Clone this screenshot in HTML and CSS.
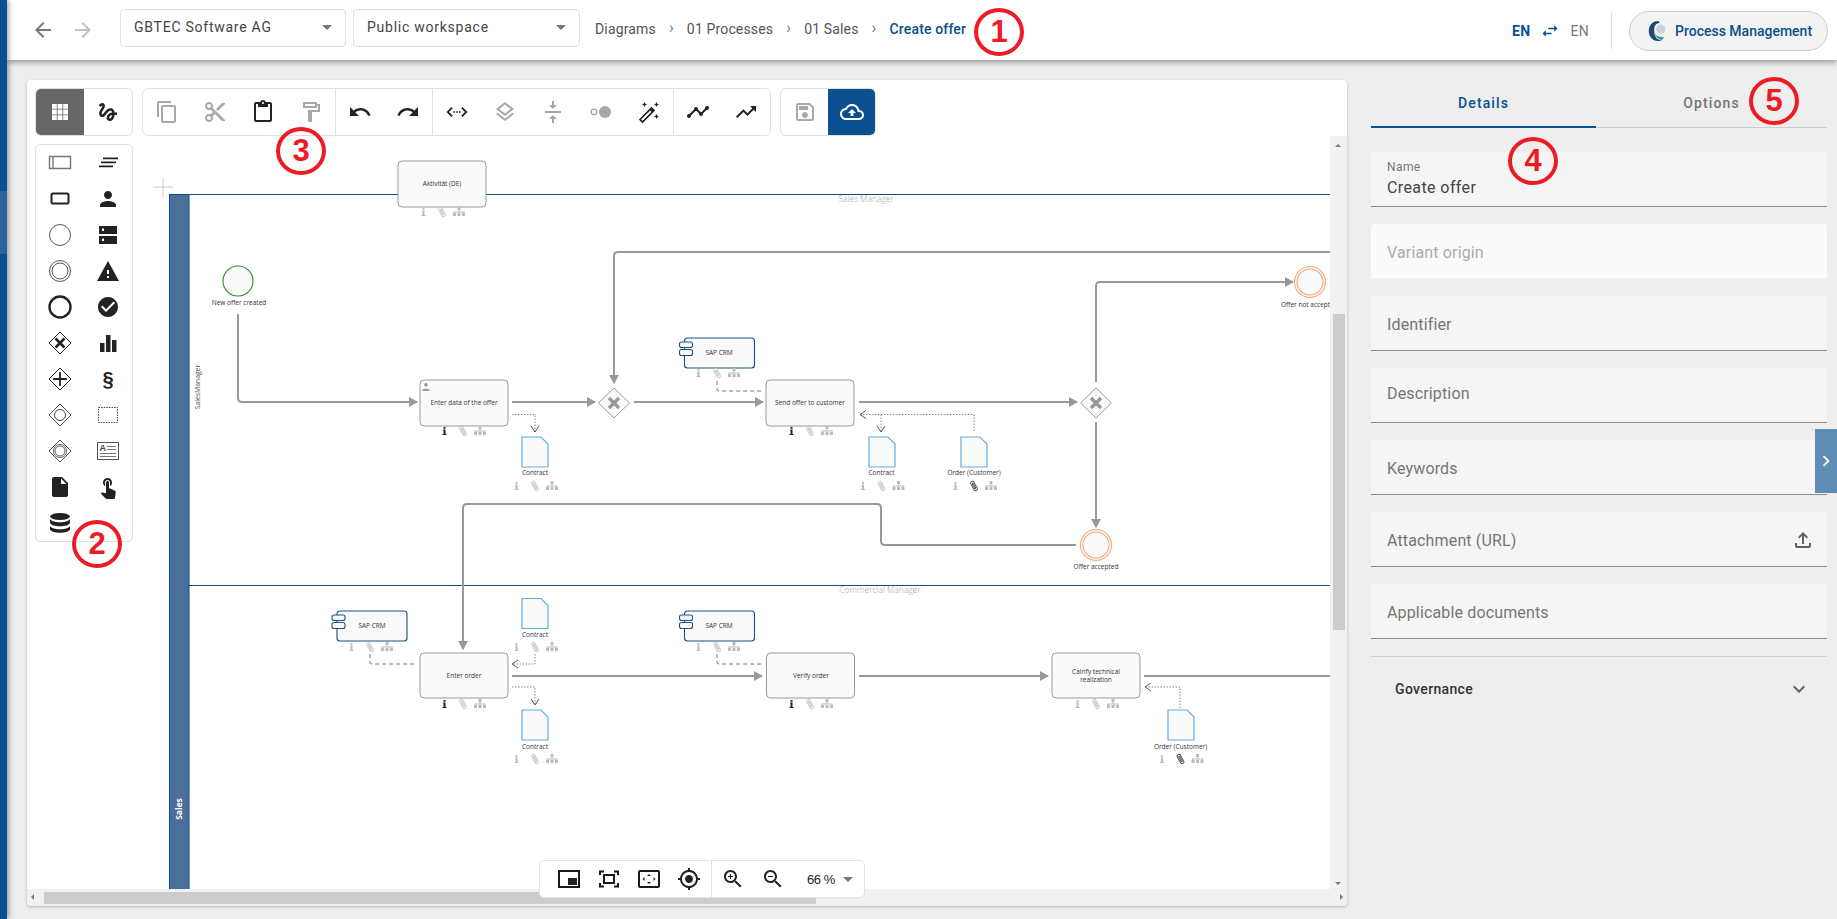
FILE: index.html
```html
<!DOCTYPE html>
<html lang="en">
  <head>
    <meta charset="UTF-8" />
    <title>Create offer</title>
    <link rel="stylesheet" href="styles.css">
  </head>
  <body>
    <div class="strip"><div class="stripItem"></div></div>

    <div class="page">
      <header class="topbar">
        <svg class="ico navIcon" viewBox="0 0 24 24"><path d="M20 11H7.83l5.59-5.59L12 4l-8 8 8 8 1.41-1.41L7.83 13H20v-2z"/></svg>
        <svg class="ico navIcon off" viewBox="0 0 24 24"><path d="M12 4l-1.41 1.41L16.17 11H4v2h12.17l-5.58 5.59L12 20l8-8z"/></svg>
        <div class="select first"><span>GBTEC Software AG</span><i class="caret"></i></div>
        <div class="select"><span>Public workspace</span><i class="caret"></i></div>
        <nav class="crumbs">
          <span>Diagrams</span><b>›</b><span>01 Processes</span><b>›</b><span>01 Sales</span><b>›</b><span class="current">Create offer</span>
        </nav>
        <div class="topRight">
          <span class="lang on">EN</span>
          <svg class="swap" viewBox="0 0 24 24"><path d="M6.99 11L3 15l3.99 4v-3H14v-2H6.99v-3zM21 9l-3.99-4v3H10v2h7.01v3L21 9z"/></svg>
          <span class="lang">EN</span>
          <div class="vline"></div>
          <div class="appBtn">
            <svg class="logo" viewBox="0 0 24 24">
              <path fill="#1d4a72" d="M13 1C7 1 3 6 3 12s4 11 10 11c2 0 3-.5 4-1-5 0-8-4-8-10S10 4 15 3c-.5-1-1-2-2-2z"/>
              <path fill="#3f8f9e" d="M9 14c1 4 4 7 8 8 1-1 2-2 2.500-3.500C15 19 11 18 9 14z"/>
              <circle fill="#c9d3da" cx="16" cy="10" r="5"/>
            </svg>
            <span>Process Management</span>
          </div>
        </div>
      </header>

      <main class="content">
        <section class="canvas">
          <svg class="diagram" viewBox="27 80 1320 826">
            <defs>
              <marker id="arrow" markerUnits="userSpaceOnUse" markerWidth="9" markerHeight="10" refX="8" refY="5" orient="auto"><path d="M0 0L9 5L0 10z" fill="#999"/></marker>
              <marker id="open" markerUnits="userSpaceOnUse" markerWidth="8" markerHeight="10" refX="7" refY="5" orient="auto"><path d="M1 1L7 5L1 9" fill="none" stroke="#555"/></marker>
              <clipPath id="view"><rect x="27" y="80" width="1303" height="809"/></clipPath>
              <g id="meta">
                <path class="miI" d="M-19.500 -4h2v1.800h-2zM-20 -1.500h2.500v4.500h1v1h-4v-1h1v-3.500h-.5z"/>
                <g class="miC"><rect x="-1.800" y="-5" width="3.600" height="10" rx="1.800" transform="rotate(-30)"/><rect x="-.6" y="-3" width="1.200" height="6" rx=".6" transform="rotate(-30)"/></g>
                <path class="miO" d="M15.500 -5h3v3h-3zM16.500 -2h1v1.500h5v1.500h-1v-.5h-9v.5h-1v-1.500h5zM11 1h3v3h-3zM15.500 1h3v3h-3zM20 1h3v3h-3z"/>
              </g>
              <g id="doc">
                <path class="docShape" d="M0 0h19l7 7v23h-26z"/>
              </g>
              <g id="sys">
                <rect class="sysBox" x="5" y="0" width="70" height="30" rx="3"/>
                <rect class="sysBox" x="0" y="4" width="13" height="5.500" rx="2"/>
                <rect class="sysBox" x="0" y="11.500" width="13" height="6" rx="2"/>
              </g>
              <path id="gwX" d="M-5 -5L5 5M5 -5L-5 5"/>
            </defs>

            <g clip-path="url(#view)">
              <path class="crosshair" d="M153 187h20M163 177v20"/>

              <!-- pool and lanes -->
              <rect class="poolHead" x="169.500" y="194.500" width="19.500" height="700"/>
              <path class="laneLine" d="M189 194.500H1330M189 585.500H1330"/>
              <text class="poolName" transform="translate(182,809) rotate(-90)">Sales</text>
              <text class="laneSide" transform="translate(200,387) rotate(-90)">SalesManager</text>
              <text class="laneName" x="866" y="202">Sales Manager</text>
              <text class="laneName" x="880" y="593">Commercial Manager</text>

              <!-- sequence flows -->
              <path class="flow" marker-end="url(#arrow)" d="M238 314V398Q238 402 242 402H417"/>
              <path class="flow" marker-end="url(#arrow)" d="M512 402H595"/>
              <path class="flow" marker-end="url(#arrow)" d="M1330 252H618Q614 252 614 256V383"/>
              <path class="flow" marker-end="url(#arrow)" d="M634 402H763"/>
              <path class="flow" marker-end="url(#arrow)" d="M859 402H1077"/>
              <path class="flow" marker-end="url(#arrow)" d="M1096 382V286Q1096 282 1100 282H1293"/>
              <path class="flow" marker-end="url(#arrow)" d="M1096 422V527"/>
              <path class="flow" marker-end="url(#arrow)" d="M1076 545H885Q881 545 881 541V508Q881 504 877 504H467Q463 504 463 508V649"/>
              <path class="flow" marker-end="url(#arrow)" d="M512 676H762"/>
              <path class="flow" marker-end="url(#arrow)" d="M859 676H1048"/>
              <path class="flow" d="M1144 676H1330"/>

              <!-- associations -->
              <path class="dash" d="M717 381V389Q717 391 719 391H762"/>
              <path class="dash" d="M370 654V662Q370 664 372 664H415"/>
              <path class="dash" d="M717 654V662Q717 664 719 664H761"/>
              <path class="dots" marker-end="url(#open)" d="M512 414.500H535V432"/>
              <path class="dots" marker-end="url(#open)" d="M881 414.500V432"/>
              <path class="dots" marker-end="url(#open)" d="M974 431V414.500H860"/>
              <path class="dots" marker-end="url(#open)" d="M535 654V664H512"/>
              <path class="dots" marker-end="url(#open)" d="M512 687H535V705"/>
              <path class="dots" marker-end="url(#open)" d="M1180 708V687H1145"/>

              <!-- events -->
              <circle class="startEv" cx="238" cy="281" r="15"/>
              <text class="lbl" x="239" y="305">New offer created</text>
              <circle class="endEv" cx="1310" cy="282" r="15.500"/><circle class="endEv" cx="1310" cy="282" r="13"/>
              <text class="lbl" x="1281" y="307" style="text-anchor:start">Offer not accepted</text>
              <circle class="endEv" cx="1096" cy="545" r="15.500"/><circle class="endEv" cx="1096" cy="545" r="13"/>
              <text class="lbl" x="1096" y="569">Offer accepted</text>

              <!-- gateways -->
              <path class="gateway" d="M614 388L629.500 403L614 418L598.500 403z"/>
              <use class="gwMark" href="#gwX" x="614" y="403"/>
              <path class="gateway" d="M1096 388L1111.500 403L1096 418L1080.500 403z"/>
              <use class="gwMark" href="#gwX" x="1096" y="403"/>

              <!-- activities -->
              <rect class="task" x="398" y="161" width="88" height="46" rx="4"/>
              <text class="lbl" x="442" y="185.500">Aktivität (DE)</text>
              <use href="#meta" x="442" y="212"/>

              <rect class="task" x="420" y="380" width="88" height="46" rx="4"/>
              <path class="taskUser" d="M426 383a1.800 1.800 0 1 1-.01 0zM422.500 390c0-1.800 7-1.800 7 0v1h-7z"/>
              <text class="lbl" x="464" y="405">Enter data of the offer</text>
              <use class="iOn" href="#meta" x="463" y="431"/>

              <rect class="task" x="766" y="380" width="88" height="46" rx="4"/>
              <text class="lbl" x="810" y="405">Send offer to customer</text>
              <use class="iOn" href="#meta" x="810" y="431"/>

              <rect class="task" x="420" y="653" width="88" height="45" rx="4"/>
              <text class="lbl" x="464" y="678">Enter order</text>
              <use class="iOn" href="#meta" x="463" y="704"/>

              <rect class="task" x="766.500" y="653" width="88" height="45" rx="4"/>
              <text class="lbl" x="811" y="678">Verify order</text>
              <use class="iOn" href="#meta" x="810" y="704"/>

              <rect class="task" x="1052" y="653" width="88" height="45" rx="4"/>
              <text class="lbl" x="1096" y="674">Calrify technical</text>
              <text class="lbl" x="1096" y="682">realization</text>
              <use href="#meta" x="1096" y="704"/>

              <!-- systems -->
              <use href="#sys" x="679.500" y="338"/>
              <text class="lbl" x="719" y="355">SAP CRM</text>
              <use href="#meta" x="717" y="373"/>
              <use href="#sys" x="332" y="611"/>
              <text class="lbl" x="372" y="628">SAP CRM</text>
              <use href="#meta" x="370" y="647"/>
              <use href="#sys" x="679.500" y="611"/>
              <text class="lbl" x="719" y="628">SAP CRM</text>
              <use href="#meta" x="717" y="647"/>

              <!-- documents -->
              <use href="#doc" x="522" y="437"/>
              <text class="lbl" x="535" y="475">Contract</text>
              <use href="#meta" x="535" y="486"/>
              <use href="#doc" x="869" y="437"/>
              <text class="lbl" x="881.500" y="475">Contract</text>
              <use href="#meta" x="881.500" y="486"/>
              <use href="#doc" x="961" y="437"/>
              <text class="lbl" x="974" y="475">Order (Customer)</text>
              <use class="cOn" href="#meta" x="974" y="486"/>
              <use href="#doc" x="522" y="598.500"/>
              <text class="lbl" x="535" y="637">Contract</text>
              <use href="#meta" x="535" y="647"/>
              <use href="#doc" x="522" y="710"/>
              <text class="lbl" x="535" y="749">Contract</text>
              <use href="#meta" x="535" y="759"/>
              <use href="#doc" x="1168" y="710"/>
              <text class="lbl" x="1180.500" y="749">Order (Customer)</text>
              <use class="cOn" href="#meta" x="1180.500" y="759"/>
            </g>
          </svg>

          <div class="toolbar">
            <div class="group">
              <div class="tool active"><svg class="ico" viewBox="0 0 24 24"><path d="M4 4h4.800v4.800H4zM9.600 4h4.800v4.800H9.600zM15.200 4H20v4.800h-4.800zM4 9.600h4.800v4.800H4zM9.600 9.600h4.800v4.800H9.600zM15.200 9.600H20v4.800h-4.800zM4 15.200h4.800V20H4zM9.600 15.200h4.800V20H9.600zM15.200 15.200H20V20h-4.800z"/></svg></div>
              <div class="tool"><svg class="ico" viewBox="0 0 24 24"><path d="M4.590 6.890c.7-.71 1.400-1.350 1.710-1.220.5.200 0 1.030-.3 1.520-.25.420-2.860 3.890-2.860 6.310 0 1.280.48 2.340 1.340 2.980.75.560 1.740.73 2.640.46 1.070-.31 1.950-1.400 3.060-2.770 1.210-1.490 2.830-3.440 4.080-3.440 1.630 0 1.650 1.010 1.760 1.790-3.780.64-5.380 3.670-5.380 5.370 0 1.700 1.440 3.090 3.210 3.090 1.630 0 4.290-1.330 4.690-6.100H21v-2.500h-2.470c-.15-1.650-1.090-4.200-4.030-4.200-2.250 0-4.180 1.910-4.940 2.840-.58.73-2.060 2.480-2.290 2.720-.25.3-.68.84-1.110.84-.45 0-.72-.83-.36-1.920.35-1.090 1.400-2.860 1.850-3.520.78-1.140 1.300-1.920 1.300-3.280C8.950 3.690 7.310 3 6.440 3 5.120 3 3.970 4 3.720 4.250c-.36.36-.66.66-.88.93l1.750 1.710zm9.290 11.660c-.31 0-.74-.26-.74-.72 0-.6.73-2.200 2.870-2.760-.3 2.690-1.430 3.480-2.130 3.480z"/></svg></div>
            </div>
            <div class="group">
              <div class="section">
                <div class="tool off"><svg class="ico" viewBox="0 0 24 24"><path d="M16 1H4c-1.100 0-2 .9-2 2v14h2V3h12V1zm3 4H8c-1.100 0-2 .9-2 2v14c0 1.100.9 2 2 2h11c1.100 0 2-.9 2-2V7c0-1.100-.9-2-2-2zm0 16H8V7h11v14z"/></svg></div>
                <div class="tool off"><svg class="ico" viewBox="0 0 24 24"><path d="M9.640 7.640c.23-.5.36-1.050.36-1.640 0-2.210-1.790-4-4-4S2 3.790 2 6s1.790 4 4 4c.59 0 1.140-.13 1.640-.36L10 12l-2.360 2.360C7.140 14.130 6.590 14 6 14c-2.210 0-4 1.790-4 4s1.790 4 4 4 4-1.790 4-4c0-.59-.13-1.140-.36-1.640L12 14l7 7h3v-1L9.640 7.640zM6 8c-1.100 0-2-.89-2-2s.9-2 2-2 2 .89 2 2-.9 2-2 2zm0 12c-1.100 0-2-.89-2-2s.9-2 2-2 2 .89 2 2-.9 2-2 2zm6-7.500c-.28 0-.5-.22-.5-.5s.22-.5.5-.5.5.22.5.5-.22.5-.5.5zM19 3l-6 6 2 2 7-7V3z"/></svg></div>
                <div class="tool"><svg class="ico" viewBox="0 0 24 24"><path d="M19 2h-4.180C14.400.84 13.300 0 12 0c-1.300 0-2.400.84-2.820 2H5c-1.100 0-2 .9-2 2v16c0 1.100.9 2 2 2h14c1.100 0 2-.9 2-2V4c0-1.100-.9-2-2-2zm-7 0c.55 0 1 .45 1 1s-.45 1-1 1-1-.45-1-1 .45-1 1-1zm7 18H5V4h2v3h10V4h2v16z"/></svg></div>
                <div class="tool off"><svg class="ico" viewBox="0 0 24 24"><path d="M18 4V3c0-.55-.45-1-1-1H5c-.55 0-1 .45-1 1v4c0 .55.45 1 1 1h12c.55 0 1-.45 1-1V6h1v4H9v11c0 .55.45 1 1 1h2c.55 0 1-.45 1-1v-9h8V4h-3zm-2 2H6V4h10v2z"/></svg></div>
              </div>
              <div class="section">
                <div class="tool"><svg class="ico" viewBox="0 0 24 24"><path d="M12.500 8c-2.650 0-5.050.99-6.900 2.600L2 7v9h9l-3.620-3.620c1.390-1.160 3.160-1.880 5.120-1.880 3.540 0 6.550 2.310 7.600 5.500l2.370-.78C21.080 11.030 17.150 8 12.500 8z"/></svg></div>
                <div class="tool"><svg class="ico" viewBox="0 0 24 24"><path d="M18.400 10.600C16.550 8.990 14.150 8 11.500 8c-4.650 0-8.580 3.030-9.960 7.220L3.900 16c1.050-3.190 4.050-5.500 7.600-5.500 1.950 0 3.730.72 5.120 1.880L13 16h9V7l-3.600 3.600z"/></svg></div>
              </div>
              <div class="section">
                <div class="tool"><svg class="ico" viewBox="0 0 24 24"><path d="M6.500 7L1.500 12L6.500 17L7.800 15.800L4 12L7.800 8.200zM17.500 7L22.500 12L17.500 17L16.200 15.800L20 12L16.200 8.200zM8.400 11.200h1.600v1.600H8.400zM11.200 11.200h1.600v1.600h-1.600zM14 11.200h1.600v1.600H14z"/></svg></div>
                <div class="tool off"><svg class="ico" viewBox="0 0 24 24"><path d="M11.990 18.540l-7.370-5.730L3 14.070l9 7 9-7-1.630-1.270-7.380 5.740zM12 16l7.360-5.730L21 9l-9-7-9 7 1.630 1.270L12 16zm0-11.470L17.740 9 12 13.470 6.260 9 12 4.530z"/></svg></div>
                <div class="tool off"><svg class="ico" viewBox="0 0 24 24"><path d="M8 19h3v4h2v-4h3l-4-4-4 4zm8-14h-3V1h-2v4H8l4 4 4-4zM4 11v2h16v-2H4z"/></svg></div>
                <div class="tool off"><svg class="ico" viewBox="0 0 24 24"><circle cx="16" cy="12" r="6"/><circle cx="5" cy="12" r="2.800" fill="none" stroke="#a8a8a8" stroke-width="1.300"/></svg></div>
                <div class="tool"><svg class="ico" viewBox="0 0 24 24"><path d="M3 19.500L14.500 8l2.500 2.500L5.500 22z" fill="none" stroke="#222" stroke-width="1.700"/><path d="M12.500 10l2.500 2.500 2-2L14.500 8zM7.500 2l.8 1.700L10 4.500l-1.700.8L7.500 7l-.8-1.700L5 4.500l1.700-.8zM19.500 2l.8 1.700 1.700.8-1.700.8-.8 1.700-.8-1.700-1.700-.8 1.700-.8zM19.500 14l.8 1.700 1.700.8-1.700.8-.8 1.700-.8-1.700-1.700-.8 1.700-.8z"/></svg></div>
              </div>
              <div class="section">
                <div class="tool"><svg class="ico" viewBox="0 0 24 24"><path d="M23 8c0 1.100-.9 2-2 2-.18 0-.35-.02-.51-.07l-3.560 3.550c.05.16.07.34.07.52 0 1.100-.9 2-2 2s-2-.9-2-2c0-.18.02-.36.07-.52l-2.550-2.550c-.16.05-.34.07-.52.07s-.36-.02-.52-.07l-4.550 4.560c.05.16.07.33.07.51 0 1.100-.9 2-2 2s-2-.9-2-2 .9-2 2-2c.18 0 .35.02.51.07l4.560-4.550C8.020 9.360 8 9.180 8 9c0-1.100.9-2 2-2s2 .9 2 2c0 .18-.02.36-.07.52l2.550 2.550c.16-.05.34-.07.52-.07s.36.02.52.07l3.550-3.560C19.020 8.350 19 8.180 19 8c0-1.100.9-2 2-2s2 .9 2 2z"/></svg></div>
                <div class="tool"><svg class="ico" viewBox="0 0 24 24"><path d="M16 6l2.290 2.290-4.880 4.880-4-4L2 16.590 3.410 18l6-6 4 4 6.300-6.290L22 12V6z"/></svg></div>
              </div>
            </div>
            <div class="group saveGroup">
              <div class="tool off"><svg class="ico" viewBox="0 0 24 24"><path d="M17 3H5c-1.110 0-2 .9-2 2v14c0 1.100.89 2 2 2h14c1.100 0 2-.9 2-2V7l-4-4zm2 16H5V5h11.170L19 7.830V19zm-7-7c-1.660 0-3 1.340-3 3s1.340 3 3 3 3-1.340 3-3-1.340-3-3-3zM6 6h9v4H6z"/></svg></div>
              <div class="tool primary"><svg class="ico" viewBox="0 0 24 24"><path d="M19.350 10.040C18.670 6.590 15.640 4 12 4 9.110 4 6.600 5.640 5.350 8.040 2.340 8.360 0 10.910 0 14c0 3.310 2.690 6 6 6h13c2.760 0 5-2.240 5-5 0-2.640-2.050-4.780-4.650-4.960zM19 18H6c-2.210 0-4-1.790-4-4 0-2.050 1.530-3.760 3.560-3.970l1.070-.11.5-.95C8.080 7.140 9.940 6 12 6c2.620 0 4.880 1.860 5.390 4.430l.3 1.500 1.530.11c1.560.1 2.780 1.410 2.780 2.960 0 1.650-1.350 3-3 3zM8 13h2.550v3h2.900v-3H16l-4-4z"/></svg></div>
            </div>
          </div>

          <div class="palette">
            <svg class="ico gray" viewBox="0 0 24 24"><path d="M1.500 5.500h21v12h-21zM5 5.500v12" fill="none" stroke="#777" stroke-width="1.400"/></svg>
            <svg class="ico" viewBox="0 0 24 24"><path d="M7 6.500h15V8.300H7zM5 10.500h15v1.800H5zM3 14.500h14v1.800H3z"/></svg>
            <svg class="ico" viewBox="0 0 24 24"><rect x="3.500" y="6.500" width="17" height="10" rx="1.500" fill="none" stroke="#222" stroke-width="2"/></svg>
            <svg class="ico" viewBox="0 0 24 24"><path d="M12 12c2.210 0 4-1.790 4-4s-1.790-4-4-4-4 1.790-4 4 1.790 4 4 4zm0 2c-2.670 0-8 1.340-8 4v2h16v-2c0-2.660-5.330-4-8-4z"/></svg>
            <svg class="ico" viewBox="0 0 24 24"><circle cx="12" cy="12" r="10.500" fill="none" stroke="#444" stroke-width=".9"/></svg>
            <svg class="ico" viewBox="0 0 24 24"><path fill-rule="evenodd" d="M3 3h18v8H3zM3 13h18v8H3zM6 5.500h2v2.500H6zM6 15.500h2V18H6z"/></svg>
            <svg class="ico" viewBox="0 0 24 24"><circle cx="12" cy="12" r="10.500" fill="none" stroke="#444" stroke-width=".9"/><circle cx="12" cy="12" r="8" fill="none" stroke="#444" stroke-width=".9"/></svg>
            <svg class="ico" viewBox="0 0 24 24"><path d="M1 22h22L12 2 1 22zm12-3h-2v-2h2v2zm0-4h-2v-4h2v4z"/></svg>
            <svg class="ico" viewBox="0 0 24 24"><circle cx="12" cy="12" r="10.500" fill="none" stroke="#222" stroke-width="2.400"/></svg>
            <svg class="ico" viewBox="0 0 24 24"><path d="M12 2C6.480 2 2 6.480 2 12s4.480 10 10 10 10-4.480 10-10S17.520 2 12 2zm-2 15l-5-5 1.410-1.410L10 14.170l7.590-7.590L19 8l-9 9z"/></svg>
            <svg class="ico" viewBox="0 0 24 24"><path d="M12 1L23 12L12 23L1 12z" fill="none" stroke="#222" stroke-width="1"/><path d="M7.500 7.500L16.500 16.500M16.500 7.500L7.500 16.500" stroke="#222" stroke-width="2.600"/></svg>
            <svg class="ico" viewBox="0 0 24 24"><path d="M4 12h4.500v9H4zM10 4h4.500v17H10zM16 9h4.500v12H16z"/></svg>
            <svg class="ico" viewBox="0 0 24 24"><path d="M12 1L23 12L12 23L1 12z" fill="none" stroke="#222" stroke-width="1"/><path d="M12 5V19M5 12H19" stroke="#222" stroke-width="1.800"/></svg>
            <span class="para">§</span>
            <svg class="ico" viewBox="0 0 24 24"><path d="M12 1L23 12L12 23L1 12z" fill="none" stroke="#333" stroke-width=".9"/><circle cx="12" cy="12" r="5.500" fill="none" stroke="#333" stroke-width=".9"/></svg>
            <svg class="ico" viewBox="0 0 24 24"><rect x="2.500" y="4.500" width="19" height="15" fill="none" stroke="#444" stroke-dasharray="1.500 1.100"/></svg>
            <svg class="ico" viewBox="0 0 24 24"><path d="M12 1L23 12L12 23L1 12z" fill="none" stroke="#333" stroke-width=".9"/><circle cx="12" cy="12" r="6.500" fill="none" stroke="#555" stroke-width=".9"/><circle cx="12" cy="12" r="5" fill="none" stroke="#555" stroke-width=".9"/></svg>
            <svg class="ico" viewBox="0 0 24 24"><rect x="1.500" y="3.500" width="21" height="17" fill="none" stroke="#555"/><text class="formA" x="3.500" y="12">A</text><path d="M11 7h9v1h-9zM11 10h9v1h-9zM4 14h16v1H4zM4 17h16v1H4z" fill="#777"/></svg>
            <svg class="ico" viewBox="0 0 24 24"><path d="M6 2c-1.100 0-1.990.9-1.990 2L4 20c0 1.100.89 2 1.990 2H18c1.100 0 2-.9 2-2V8l-6-6H6zm7 7V3.500L18.500 9H13z"/></svg>
            <svg class="ico" viewBox="0 0 24 24"><path d="M9 11.240V7.500C9 6.120 10.120 5 11.500 5S14 6.120 14 7.500v3.740c1.210-.81 2-2.180 2-3.740C16 5.010 13.990 3 11.500 3S7 5.010 7 7.500c0 1.560.79 2.930 2 3.740zm9.840 4.630l-4.540-2.260c-.17-.07-.35-.11-.54-.11H13v-6c0-.83-.67-1.500-1.500-1.500S10 6.670 10 7.500v10.740l-3.430-.72c-.08-.01-.15-.03-.24-.03-.31 0-.59.13-.79.33l-.79.8 4.940 4.940c.27.27.65.44 1.060.44h6.790c.75 0 1.330-.55 1.440-1.280l.75-5.270c.01-.07.02-.14.02-.2 0-.62-.38-1.160-.91-1.380z"/></svg>
            <svg class="ico" viewBox="0 0 24 24"><ellipse cx="12" cy="5.500" rx="10" ry="3.500"/><path d="M2 8c1 2 5 3.200 10 3.200S21 10 22 8v4c-1 2-5 3.300-10 3.300S3 14 2 12zM2 15c1 2 5 3.200 10 3.200S21 17 22 15v3.500c-1 2-5 3.300-10 3.300S3 20.500 2 18.500z"/></svg>
          </div>

          <div class="zoomBar">
            <div class="section">
              <div class="ztool"><svg class="ico" viewBox="0 0 24 24"><rect x="2" y="4" width="20" height="16" fill="none" stroke="#1a1a1a" stroke-width="2"/><rect x="11" y="11" width="9" height="7"/></svg></div>
              <div class="ztool"><svg class="ico" viewBox="0 0 24 24"><path d="M3 8V4.500h4M17 4.500h4V8M21 16v3.500h-4M7 19.500H3V16" fill="none" stroke="#1a1a1a" stroke-width="2"/><rect x="7" y="8" width="10" height="8" fill="none" stroke="#1a1a1a" stroke-width="2"/></svg></div>
              <div class="ztool"><svg class="ico" viewBox="0 0 24 24"><rect x="2" y="4" width="20" height="16" rx="1" fill="none" stroke="#1a1a1a" stroke-width="2"/><path d="M12 7l2 2h-4zM12 17l2-2h-4zM5.500 12l2-2v4zM18.500 12l-2-2v4z"/></svg></div>
              <div class="ztool"><svg class="ico" viewBox="0 0 24 24"><path d="M12 8c-2.210 0-4 1.790-4 4s1.790 4 4 4 4-1.790 4-4-1.790-4-4-4zm8.940 3c-.46-4.170-3.770-7.480-7.940-7.940V1h-2v2.060C6.830 3.520 3.520 6.830 3.060 11H1v2h2.060c.46 4.170 3.770 7.480 7.940 7.940V23h2v-2.060c4.170-.46 7.480-3.770 7.940-7.940H23v-2h-2.060zM12 19c-3.870 0-7-3.130-7-7s3.130-7 7-7 7 3.130 7 7-3.130 7-7 7z"/></svg></div>
            </div>
            <div class="ztool"><svg class="ico" viewBox="0 0 24 24"><path d="M15.500 14h-.79l-.28-.27C15.410 12.590 16 11.110 16 9.500 16 5.910 13.090 3 9.500 3S3 5.910 3 9.500 5.910 16 9.500 16c1.610 0 3.090-.59 4.230-1.570l.27.28v.79l5 4.990L20.490 19l-4.990-5zm-6 0C7.010 14 5 11.990 5 9.500S7.010 5 9.500 5 14 7.010 14 9.500 11.990 14 9.500 14zm2.500-4h-2v2H9v-2H7V9h2V7h1v2h2v1z"/></svg></div>
            <div class="ztool"><svg class="ico" viewBox="0 0 24 24"><path d="M15.500 14h-.79l-.28-.27C15.410 12.590 16 11.110 16 9.500 16 5.910 13.090 3 9.500 3S3 5.910 3 9.500 5.910 16 9.500 16c1.610 0 3.090-.59 4.230-1.570l.27.28v.79l5 4.990L20.490 19l-4.990-5zm-6 0C7.010 14 5 11.990 5 9.500S7.010 5 9.500 5 14 7.010 14 9.500 11.990 14 9.500 14zM7 9h5v1H7z"/></svg></div>
            <span class="zoomVal">66 %</span><i class="caret"></i>
          </div>

          <div class="vbar"><div class="vthumb"></div><span class="sa up"></span><span class="sa down"></span></div>
          <div class="hbar"><div class="hthumb"></div><span class="sa left"></span><span class="sa right"></span></div>
        </section>

        <aside class="panel">
          <div class="tabs">
            <div class="tab selected">Details</div>
            <div class="tab">Options</div>
          </div>
          <div class="fields">
            <div class="field named"><small>Name</small><span class="value">Create offer</span></div>
            <div class="field disabled"><span>Variant origin</span></div>
            <div class="field"><span>Identifier</span></div>
            <div class="field raised"><span>Description</span></div>
            <div class="field"><span>Keywords</span></div>
            <div class="field"><span>Attachment (URL)</span>
              <svg class="upload" viewBox="0 0 24 24"><path d="M18 15v3H6v-3H4v3c0 1.100.9 2 2 2h12c1.100 0 2-.9 2-2v-3h-2zM7 9l1.410 1.410L11 7.830V16h2V7.830l2.590 2.580L17 9l-5-5-5 5z"/></svg>
            </div>
            <div class="field"><span>Applicable documents</span></div>
          </div>
          <div class="accordion">
            <span>Governance</span>
            <svg class="chev" viewBox="0 0 24 24"><path d="M7.410 8.590L12 13.170l4.590-4.580L18 10l-6 6-6-6z"/></svg>
          </div>
        </aside>
      </main>
    </div>

    <div class="sideTab"><svg viewBox="0 0 24 24"><path d="M10 6L8.590 7.410 13.170 12l-4.580 4.590L10 18l6-6z"/></svg></div>

    <div class="mark m1">1</div>
    <div class="mark m2">2</div>
    <div class="mark m3">3</div>
    <div class="mark m4">4</div>
    <div class="mark m5">5</div>
  </body>
</html>
```

FILE: styles.css
```css
* {
  margin: 0;
  padding: 0;
  box-sizing: border-box;
}

body {
  width: 1837px;
  height: 919px;
  display: flex;
  overflow: hidden;
  background-color: #eeeeee;
  font-family: Roboto, sans-serif;
  font-size: 14px;
  color: #444;
}

.strip {
  width: 7px;
  flex: none;
  background-color: #0a4f8f;
  box-shadow: 2px 0 5px rgba(0, 0, 0, 0.35);
  z-index: 2;
}

.stripItem {
  height: 63px;
  margin-top: 191px;
  background-color: #2a639a;
}

.page {
  flex: 1;
  display: flex;
  flex-direction: column;
  min-width: 0;
}

.ico {
  width: 24px;
  height: 24px;
  fill: #222;
  display: block;
}

/* top bar */
.topbar {
  height: 60px;
  flex: none;
  display: flex;
  align-items: center;
  padding: 0 9px 0 24px;
  background-color: #fff;
  box-shadow: 0 2px 6px rgba(0, 0, 0, 0.4);
  position: relative;
  z-index: 1;
}

.navIcon {
  fill: #777;
  margin-right: 16px;
}

.navIcon.off {
  fill: #c2c2c2;
  margin-right: 25px;
}

.select {
  width: 227px;
  height: 38px;
  margin-top: -4px;
  margin-right: 7px;
  padding: 0 13px 2px;
  display: flex;
  align-items: center;
  justify-content: space-between;
  border: 1px solid #e0e0e0;
  border-radius: 4px;
  letter-spacing: 0.75px;
  color: #444;
}

.select.first {
  width: 226px;
}

.caret {
  width: 0;
  height: 0;
  border-left: 5px solid transparent;
  border-right: 5px solid transparent;
  border-top: 5px solid #777;
  display: block;
}

.crumbs {
  display: flex;
  align-items: center;
  margin-left: 8px;
  margin-top: -2px;
  letter-spacing: 0.15px;
  color: #555;
}

.crumbs b {
  width: 31px;
  text-align: center;
  font-weight: 400;
  font-size: 16px;
  color: #777;
  margin-top: -3px;
}

.crumbs .current {
  color: #0a4f8f;
  font-weight: 500;
}

.topRight {
  margin-left: auto;
  display: flex;
  align-items: center;
  height: 100%;
  margin-top: 1px;
}

.lang {
  letter-spacing: 0.3px;
  color: #777;
}

.lang.on {
  font-weight: 700;
  color: #0a4f8f;
}

.swap {
  width: 20px;
  height: 20px;
  margin: 0 10px;
  fill: #0a4f8f;
}

.vline {
  width: 1px;
  height: 36px;
  margin: 0 17px 0 22px;
  background-color: #ddd;
}

.appBtn {
  width: 199px;
  height: 40px;
  display: flex;
  align-items: center;
  padding-left: 16px;
  gap: 7px;
  border: 1px solid #ccc;
  border-radius: 20px;
  background-color: #f3f3f3;
  font-weight: 500;
  color: #0a4f8f;
}

.logo {
  width: 22px;
  height: 22px;
}

/* main area */
.content {
  flex: 1;
  display: flex;
  align-items: flex-start;
  padding: 20px 0 0 20px;
}

.canvas {
  width: 1320px;
  height: 826px;
  flex: none;
  position: relative;
  overflow: hidden;
  background-color: #fff;
  border-radius: 4px;
  box-shadow: 0 1px 3px rgba(0, 0, 0, 0.25);
}

.diagram {
  width: 1320px;
  height: 826px;
  display: block;
}

.crosshair {
  stroke: #c8c8c8;
  fill: none;
}

.poolHead {
  fill: #4a6f9a;
  stroke: #0a4f8f;
}

.laneLine {
  stroke: #174a80;
  stroke-width: 1.1;
  fill: none;
}

.poolName {
  font: 700 8.5px "Open Sans", sans-serif;
  fill: #fff;
  text-anchor: middle;
}

.laneSide {
  font: 6.8px "Open Sans", sans-serif;
  fill: #555;
  text-anchor: middle;
}

.laneName {
  font: 300 8.5px "Open Sans", sans-serif;
  fill: #a8a8a8;
  text-anchor: middle;
}

.lbl {
  font: 6.5px "Open Sans", sans-serif;
  fill: #333;
  text-anchor: middle;
}

.flow {
  fill: none;
  stroke: #999;
  stroke-width: 2;
}

.dash {
  fill: none;
  stroke: #666;
  stroke-width: 0.9;
  stroke-dasharray: 4 3;
}

.dots {
  fill: none;
  stroke: #777;
  stroke-width: 0.9;
  stroke-dasharray: 1.5 1.5;
}

.task {
  fill: #fafafa;
  stroke: #999;
}

.taskUser {
  fill: #999;
}

.gateway {
  fill: #fafafa;
  stroke: #999;
}

.gwMark {
  fill: none;
  stroke: #999;
  stroke-width: 3.4;
}

.startEv {
  fill: #fafafa;
  stroke: #2e8b2e;
  stroke-width: 1.1;
}

.endEv {
  fill: #fafafa;
  stroke: #f4a97e;
  stroke-width: 1.1;
}

.docShape {
  fill: #fafafa;
  stroke: #62ade0;
  stroke-width: 1.2;
}

.sysBox {
  fill: #fafafa;
  stroke: #1d4f86;
  stroke-width: 1.1;
}

.miI {
  fill: var(--mi, #bbb);
}

.miC rect {
  fill: none;
  stroke: var(--mc, #c4c4c4);
  stroke-width: 0.9;
}

.miO {
  fill: #bbb;
}

.iOn {
  --mi: #222;
}

.cOn {
  --mc: #444;
}

/* toolbars over the canvas */
.toolbar {
  position: absolute;
  left: 8px;
  top: 8px;
  display: flex;
  gap: 9px;
}

.group {
  height: 48px;
  display: flex;
  background-color: #fff;
  border: 1px solid #e0e0e0;
  border-radius: 6px;
  overflow: hidden;
}

.section {
  display: flex;
  border-right: 1px solid #e0e0e0;
}

.section:last-child {
  border-right: 0;
}

.tool {
  width: 48px;
  display: flex;
  align-items: center;
  justify-content: center;
}

.saveGroup .tool {
  width: 47px;
}

.tool.off .ico {
  fill: #a8a8a8;
}

.tool.active {
  background-color: #666;
}

.tool.active .ico {
  fill: #fff;
}

.tool.primary {
  background-color: #0a4f8f;
}

.tool.primary .ico {
  fill: #fff;
}

.palette {
  position: absolute;
  left: 8px;
  top: 64px;
  width: 98px;
  height: 398px;
  display: grid;
  grid-template-columns: repeat(2, 48px);
  grid-auto-rows: 36px;
  justify-items: center;
  align-items: center;
  background-color: #fff;
  border: 1px solid #e0e0e0;
  border-radius: 5px;
}

.para {
  font: 700 20px "Liberation Sans", sans-serif;
  color: #222;
}

.formA {
  font: 700 9px "Liberation Sans", sans-serif;
  fill: #444;
}

.zoomBar {
  position: absolute;
  left: 512px;
  top: 780px;
  width: 326px;
  height: 38px;
  padding-left: 9px;
  display: flex;
  align-items: center;
  background-color: #fff;
  border: 1px solid #e5e5e5;
  border-radius: 5px;
  z-index: 1;
}

.zoomBar .section {
  height: 100%;
  padding-right: 2px;
  margin-right: 1px;
}

.ztool {
  width: 40px;
  display: flex;
  justify-content: center;
  align-items: center;
}

.zoomVal {
  margin-left: 14px;
  margin-right: 8px;
  font-family: "Liberation Sans", sans-serif;
  font-size: 13px;
  letter-spacing: -0.4px;
  color: #222;
}

.vbar {
  position: absolute;
  right: 0;
  top: 56px;
  bottom: 17px;
  width: 17px;
  background-color: #f1f1f1;
}

.vthumb {
  width: 12px;
  height: 316px;
  margin: 178px 0 0 3px;
  background-color: #cccccc;
}

.hbar {
  position: absolute;
  left: 0;
  right: 0;
  bottom: 0;
  height: 17px;
  background-color: #f1f1f1;
}

.hthumb {
  width: 772px;
  height: 12px;
  margin: 3px 0 0 17px;
  background-color: #cccccc;
}

.sa {
  position: absolute;
  width: 0;
  height: 0;
  border: 3.5px solid transparent;
}

.sa.up {
  top: 5px;
  left: 5px;
  border-bottom-color: #777;
}

.sa.down {
  bottom: 1px;
  left: 5px;
  border-top-color: #777;
}

.sa.left {
  left: 1px;
  top: 5px;
  border-right-color: #777;
}

.sa.right {
  right: 1px;
  top: 5px;
  border-left-color: #777;
}

/* right panel */
.panel {
  width: 456px;
  margin-left: 24px;
  flex: none;
}

.tabs {
  height: 48px;
  display: flex;
  border-bottom: 1px solid #ccc;
}

.tab {
  flex: 1;
  height: 48px;
  padding-bottom: 2px;
  display: flex;
  align-items: center;
  justify-content: center;
  font-weight: 500;
  letter-spacing: 1.1px;
  color: #757575;
}

.tab.selected {
  flex: none;
  width: 225px;
  color: #0a4f8f;
  border-bottom: 2px solid #0a4f8f;
  padding-bottom: 0;
}

.fields {
  margin-top: 24px;
  display: flex;
  flex-direction: column;
  gap: 17px;
}

.field {
  height: 55px;
  padding: 2px 16px 0;
  display: flex;
  flex-direction: column;
  justify-content: center;
  position: relative;
  background-color: #f5f5f5;
  border-bottom: 1px solid #8c8c8c;
  border-radius: 4px 4px 0 0;
  font-size: 16px;
  letter-spacing: 0.15px;
  color: #757575;
}

.field small {
  font-size: 12px;
  letter-spacing: 0.4px;
  line-height: 14px;
  margin-bottom: 3.5px;
}

.field .value {
  color: #444;
  line-height: 21px;
  letter-spacing: 0.4px;
}

.field.named {
  padding-top: 0;
}

.field.disabled {
  background-color: #fafafa;
  border-bottom: 1px solid #f0f0f0;
  color: #aaa;
}

.field.raised {
  padding-bottom: 6px;
}

.upload {
  position: absolute;
  right: 12px;
  top: 16px;
  width: 24px;
  height: 24px;
  fill: #616161;
}

.accordion {
  margin-top: 17px;
  height: 58px;
  padding: 0 16px 0 24px;
  display: flex;
  align-items: center;
  justify-content: space-between;
  border-top: 1px solid #d0d0d0;
  letter-spacing: 0.35px;
  font-weight: 500;
  color: #333;
}

.accordion span {
  margin-top: 7px;
}

.chev {
  width: 24px;
  height: 24px;
  fill: #616161;
  margin-top: 6px;
}

.sideTab {
  position: absolute;
  left: 1815px;
  top: 429px;
  width: 22px;
  height: 64px;
  display: flex;
  align-items: center;
  justify-content: center;
  background-color: #5f8db5;
}

.sideTab svg {
  width: 22px;
  height: 22px;
  fill: #fff;
}

/* red callouts */
.mark {
  position: absolute;
  width: 50px;
  height: 48px;
  display: flex;
  align-items: center;
  justify-content: center;
  border: 4px solid #ed1c24;
  border-radius: 50%;
  font: 700 31px "Liberation Sans", sans-serif;
  color: #ed1c24;
  z-index: 3;
}

.m1 { left: 974px; top: 8px; }
.m2 { left: 72px; top: 520px; }
.m3 { left: 276px; top: 127px; }
.m4 { left: 1508px; top: 137px; }
.m5 { left: 1749px; top: 77px; }
```
